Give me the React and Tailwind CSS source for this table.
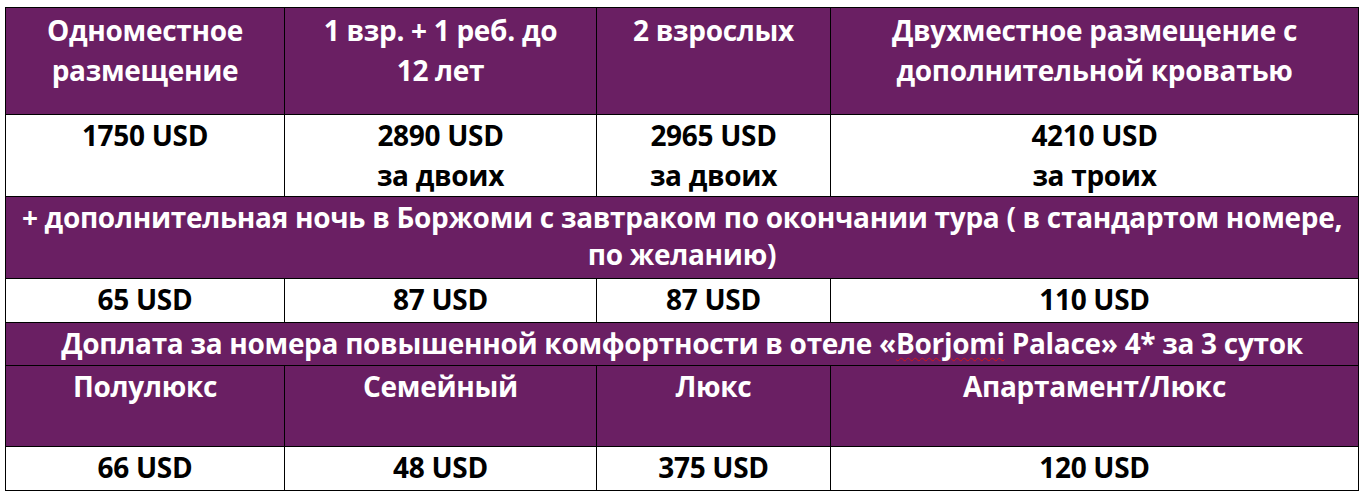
import React from "react";

const P = "bg-[#6a1f63] text-white";
const W = "bg-white text-black";
const cell = "border border-black text-center align-top p-0";

export default function App() {
  return (
    <div className="w-[1362px] h-[492px] bg-white pt-[7px] pl-[5px]" style={{ fontFamily: '"Open Sans", "Noto Sans", sans-serif' }}>
      <table className="table-fixed border-collapse w-[1353px] font-bold text-[28px] tracking-[-0.3px]">
        <colgroup>
          <col className="w-[279px]" />
          <col className="w-[312px]" />
          <col className="w-[234px]" />
          <col className="w-[528px]" />
        </colgroup>
        <tbody>
          <tr>
            <td className={`${cell} ${P} h-[107px] pt-[2px] leading-[40px]`}>Одноместное<br />размещение</td>
            <td className={`${cell} ${P} h-[107px] pt-[2px] leading-[40px]`}>1 взр. + 1 реб. до<br />12 лет</td>
            <td className={`${cell} ${P} h-[107px] pt-[2px] leading-[40px]`}>2 взрослых</td>
            <td className={`${cell} ${P} h-[107px] pt-[2px] leading-[40px]`}>Двухместное размещение с<br />дополнительной кроватью</td>
          </tr>
          <tr>
            <td className={`${cell} ${W} h-[82px] leading-[40px]`}>1750 USD</td>
            <td className={`${cell} ${W} h-[82px] leading-[40px]`}>2890 USD<br />за двоих</td>
            <td className={`${cell} ${W} h-[82px] leading-[40px]`}>2965 USD<br />за двоих</td>
            <td className={`${cell} ${W} h-[82px] leading-[40px]`}>4210 USD<br />за троих</td>
          </tr>
          <tr>
            <td colSpan={4} className={`${cell} ${P} h-[82px] pt-[2px] leading-[37px]`}>
              + дополнительная ночь в Боржоми с завтраком по окончании тура ( в стандартом номере,<br />по желанию)
            </td>
          </tr>
          <tr>
            <td className={`${cell} ${W} h-[44px] leading-[40px]`}>65 USD</td>
            <td className={`${cell} ${W} h-[44px] leading-[40px]`}>87 USD</td>
            <td className={`${cell} ${W} h-[44px] leading-[40px]`}>87 USD</td>
            <td className={`${cell} ${W} h-[44px] leading-[40px]`}>110 USD</td>
          </tr>
          <tr>
            <td colSpan={4} className={`${cell} ${P} h-[43px] leading-[40px]`}>
              Доплата за номера повышенной комфортности в отеле «
              <span className="underline decoration-wavy decoration-[#d01818] decoration-1 underline-offset-[3px]">Borjomi</span>
              {" "}Palace» 4* за 3 суток
            </td>
          </tr>
          <tr>
            <td className={`${cell} ${P} h-[81px] leading-[40px]`}>Полулюкс</td>
            <td className={`${cell} ${P} h-[81px] leading-[40px]`}>Семейный</td>
            <td className={`${cell} ${P} h-[81px] leading-[40px]`}>Люкс</td>
            <td className={`${cell} ${P} h-[81px] leading-[40px]`}>Апартамент/Люкс</td>
          </tr>
          <tr>
            <td className={`${cell} ${W} h-[44px] leading-[40px]`}>66 USD</td>
            <td className={`${cell} ${W} h-[44px] leading-[40px]`}>48 USD</td>
            <td className={`${cell} ${W} h-[44px] leading-[40px]`}>375 USD</td>
            <td className={`${cell} ${W} h-[44px] leading-[40px]`}>120 USD</td>
          </tr>
        </tbody>
      </table>
    </div>
  );
}
